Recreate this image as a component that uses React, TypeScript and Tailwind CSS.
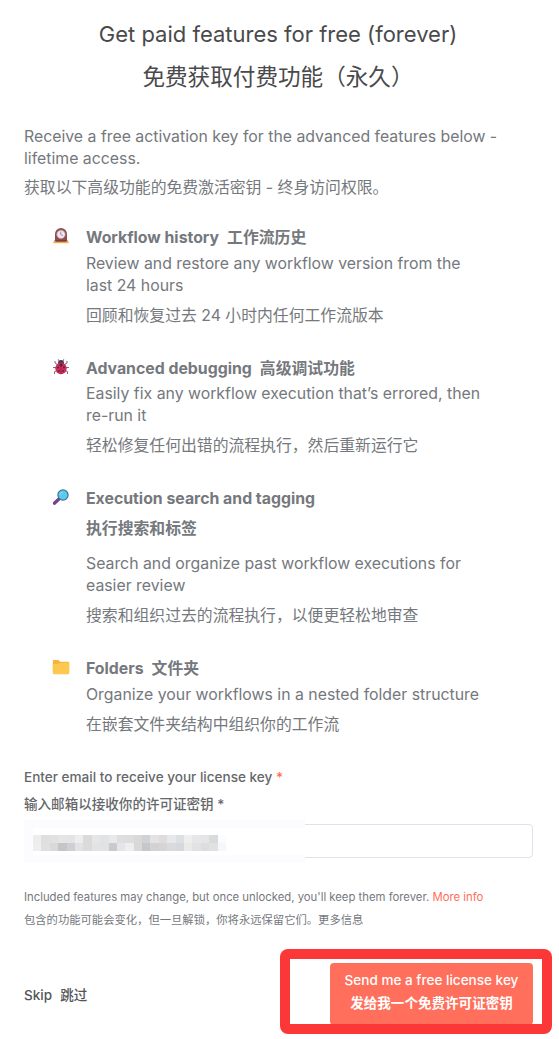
import type { ReactNode } from "react";

type Feature = {
  icon: ReactNode;
  title: string;
  titleZh: string;
  stacked?: boolean;
  lines: [string, string?];
  zh: string;
};

function ClockIcon() {
  return (
    <svg viewBox="0 0 18 18" className="h-[18px] w-[18px]">
      <path d="M3 14V7a6 6 0 0 1 12 0v7z" fill="#8b4f4f" />
      <path d="M4 14h10v1.2H4z" fill="#6d3a40" />
      <circle cx="9" cy="7.4" r="4.2" fill="#efe3ee" stroke="#c49aa5" strokeWidth=".7" />
      <path d="M8.7 4.6v3l2.2 1" fill="none" stroke="#8c7895" strokeWidth=".8" />
      <path d="M1.4 14.4h15.2v1.8H1.4z" fill="#f5ad3e" />
      <path d="M2.4 13.4h13.2v1H2.4z" fill="#70363d" />
    </svg>
  );
}

function LadybugIcon() {
  return (
    <svg viewBox="0 0 18 18" className="h-[18px] w-[18px]">
      <path
        d="M5.5 6.5 3 5V3M12.5 6.5 15 5V3M4.5 9.5H1M13.5 9.5H17M5 12.5l-2.5 1.2V16M13 12.5l2.5 1.2V16"
        fill="none"
        stroke="#6b5a70"
        strokeWidth=".9"
      />
      <path d="M6 5a3 3 0 0 1 6 0v1H6z" fill="#4b3b50" />
      <path d="m7 3-.8-1.8M11 3l.8-1.8" stroke="#6b5a70" strokeWidth=".8" />
      <ellipse cx="9" cy="10.3" rx="5.7" ry="5.9" fill="#d02b5b" />
      <path d="M9 4.5v11.6" stroke="#8a2648" strokeWidth=".8" />
      <circle cx="9" cy="7" r="1.6" fill="#51283f" />
      <circle cx="6" cy="9.5" r="1" fill="#64243f" />
      <circle cx="12" cy="9.5" r="1" fill="#64243f" />
      <circle cx="6.9" cy="13" r=".9" fill="#64243f" />
      <circle cx="11.1" cy="13" r=".9" fill="#64243f" />
    </svg>
  );
}

function SearchIcon() {
  return (
    <svg viewBox="0 0 18 18" className="h-[18px] w-[18px]">
      <path d="m7.2 10.8-4.8 4.4" stroke="#76418b" strokeWidth="3.2" strokeLinecap="round" />
      <circle cx="11" cy="7" r="5.1" fill="#5bcbec" stroke="#3f6f9b" strokeWidth="1.2" />
      <path d="M8.2 7A2.9 2.9 0 0 1 11 4.1" fill="none" stroke="#83dcf3" strokeWidth="1" />
    </svg>
  );
}

function FolderIcon() {
  return (
    <svg viewBox="0 0 18 18" className="h-[18px] w-[18px]">
      <path d="M.8 3a1 1 0 0 1 1-1h4.6l1.8 1.8h8a1 1 0 0 1 1 1V13H.8z" fill="#f5b53a" />
      <path d="M.8 6h5.6l2-1.3h8.8v10.5a1 1 0 0 1-1 1H1.8a1 1 0 0 1-1-1z" fill="#fdc850" />
    </svg>
  );
}

const features: Feature[] = [
  {
    icon: <ClockIcon />,
    title: "Workflow history",
    titleZh: "工作流历史",
    lines: ["Review and restore any workflow version from the", "last 24 hours"],
    zh: "回顾和恢复过去 24 小时内任何工作流版本",
  },
  {
    icon: <LadybugIcon />,
    title: "Advanced debugging",
    titleZh: "高级调试功能",
    lines: ["Easily fix any workflow execution that’s errored, then", "re-run it"],
    zh: "轻松修复任何出错的流程执行，然后重新运行它",
  },
  {
    icon: <SearchIcon />,
    title: "Execution search and tagging",
    titleZh: "执行搜索和标签",
    stacked: true,
    lines: ["Search and organize past workflow executions for", "easier review"],
    zh: "搜索和组织过去的流程执行，以便更轻松地审查",
  },
  {
    icon: <FolderIcon />,
    title: "Folders",
    titleZh: "文件夹",
    lines: ["Organize your workflows in a nested folder structure"],
    zh: "在嵌套文件夹结构中组织你的工作流",
  },
];

// Colours of the pixelated block that hides the address
const mosaic = [
  ["#eeecec", "#dfdfdf", "#e2e1e1", "#e5e5e6", "#e4e4e5", "#ededed", "#dadadb", "#e5e6e8", "#e1e3e5", "#e9e9ea", "#dededf", "#dddddd", "#d9d9da", "#d0d2d4", "#e3e3e4", "#dedddd", "#e7e8ea", "#dde0e3", "#eeeeee", "#e6e7e8", "#e5e5e5", "#d9dadb", "#fafcfe"],
  ["#f1efee", "#e0dfe2", "#dad8d9", "#c4c5c8", "#cfd0d5", "#e2e2e3", "#dbdbdc", "#e3e3e3", "#e2e2e3", "#c8cbce", "#e3e5e9", "#efeeed", "#d8d8d9", "#c5c8cb", "#d3d1d2", "#d8d4d4", "#d9dadd", "#d6d8de", "#ebeae9", "#e2e2e3", "#dddddf", "#e2e1e2", "#f3f8fc"],
];

function FeatureItem({ icon, title, titleZh, stacked, lines, zh }: Feature) {
  return (
    <li className="flex">
      <div className="w-[34px] shrink-0">{icon}</div>
      <div className="whitespace-nowrap text-[15.83px] leading-[22px]">
        {stacked ? (
          <h2 className="mb-[13px] font-bold">
            <span className="block">{title}</span>
            <span className="mt-2 block">{titleZh}</span>
          </h2>
        ) : (
          <h2 className="mb-[3.5px] flex gap-2 font-bold">
            <span>{title}</span>
            <span>{titleZh}</span>
          </h2>
        )}
        {lines.map((line) => (
          <p key={line}>{line}</p>
        ))}
        <p className="mt-2">{zh}</p>
      </div>
    </li>
  );
}

export default function App() {
  return (
    <main className="h-[1039px] w-[559px] overflow-hidden bg-white px-6 pt-[18px] font-['Inter','Noto_Sans_CJK_SC',sans-serif] text-[#75787d]">
      <header className="mr-[3px] whitespace-nowrap text-center text-[22px] leading-8 text-[#4a4a4c]">
        <h1>Get paid features for free (forever)</h1>
        <p className="mt-[11px] text-[22.6px]">免费获取付费功能（永久）</p>
      </header>

      <section className="mt-[33px] whitespace-nowrap text-[15.83px] leading-[22px]">
        <p>Receive a free activation key for the advanced features below -</p>
        <p>lifetime access.</p>
        <p className="mt-[7px]">获取以下高级功能的免费激活密钥 - 终身访问权限。</p>
      </section>

      <ul className="ml-7 mt-7 flex flex-col gap-[31px]">
        {features.map((feature) => (
          <FeatureItem key={feature.title} {...feature} />
        ))}
      </ul>

      <form className="mt-[31px]">
        <label className="block whitespace-nowrap text-[13.55px] font-medium leading-5 text-[#65676b]">
          <span className="block">
            Enter email to receive your license key <span className="text-[#ff6d5a]">*</span>
          </span>
          <span className="mt-[7px] block">输入邮箱以接收你的许可证密钥 *</span>
        </label>
        <div className="mt-2.5 flex h-[34px] w-[509px] rounded border border-[#dfe2ec]">
          <div className="-ml-px -mt-[5px] h-[43px] w-[281px] bg-[#fcfcfe] pl-[9px] pt-[15px]">
            <div className="-mt-[7px] h-[27px] bg-white pt-[7px]">
              {mosaic.map((row, y) => (
                <div key={y} className="flex">
                  {row.map((color, x) => (
                    <span key={x} className="h-[8.4px] w-[8.4px]" style={{ backgroundColor: color }} />
                  ))}
                </div>
              ))}
            </div>
          </div>
        </div>
        <div className="mt-[30px] whitespace-nowrap text-[11.32px] leading-[18px]">
          <p>
            Included features may change, but once unlocked, you'll keep them forever.{" "}
            <a className="text-[#ff6d5a]">More info</a>
          </p>
          <p className="mt-[5px]">包含的功能可能会变化，但一旦解锁，你将永远保留它们。更多信息</p>
        </div>
      </form>

      <footer className="relative mt-[34px] flex items-start justify-between pr-[2px] text-[13.55px] font-medium">
        <button className="mt-[22px] flex gap-2 leading-5 text-[#535559]">
          <span>Skip</span>
          <span>跳过</span>
        </button>
        <button className="h-[62px] w-[203px] whitespace-nowrap rounded bg-[#ff6f5c] pb-1 leading-[23px] text-white">
          <span className="block">Send me a free license key</span>
          <span className="block font-bold">发给我一个免费许可证密钥</span>
        </button>
        {/* highlight drawn around the submit button */}
        <div className="pointer-events-none absolute -right-[17px] -top-[14px] h-[85px] w-[272px] rounded-lg border-[10px] border-[#fc3737]" />
      </footer>
    </main>
  );
}
